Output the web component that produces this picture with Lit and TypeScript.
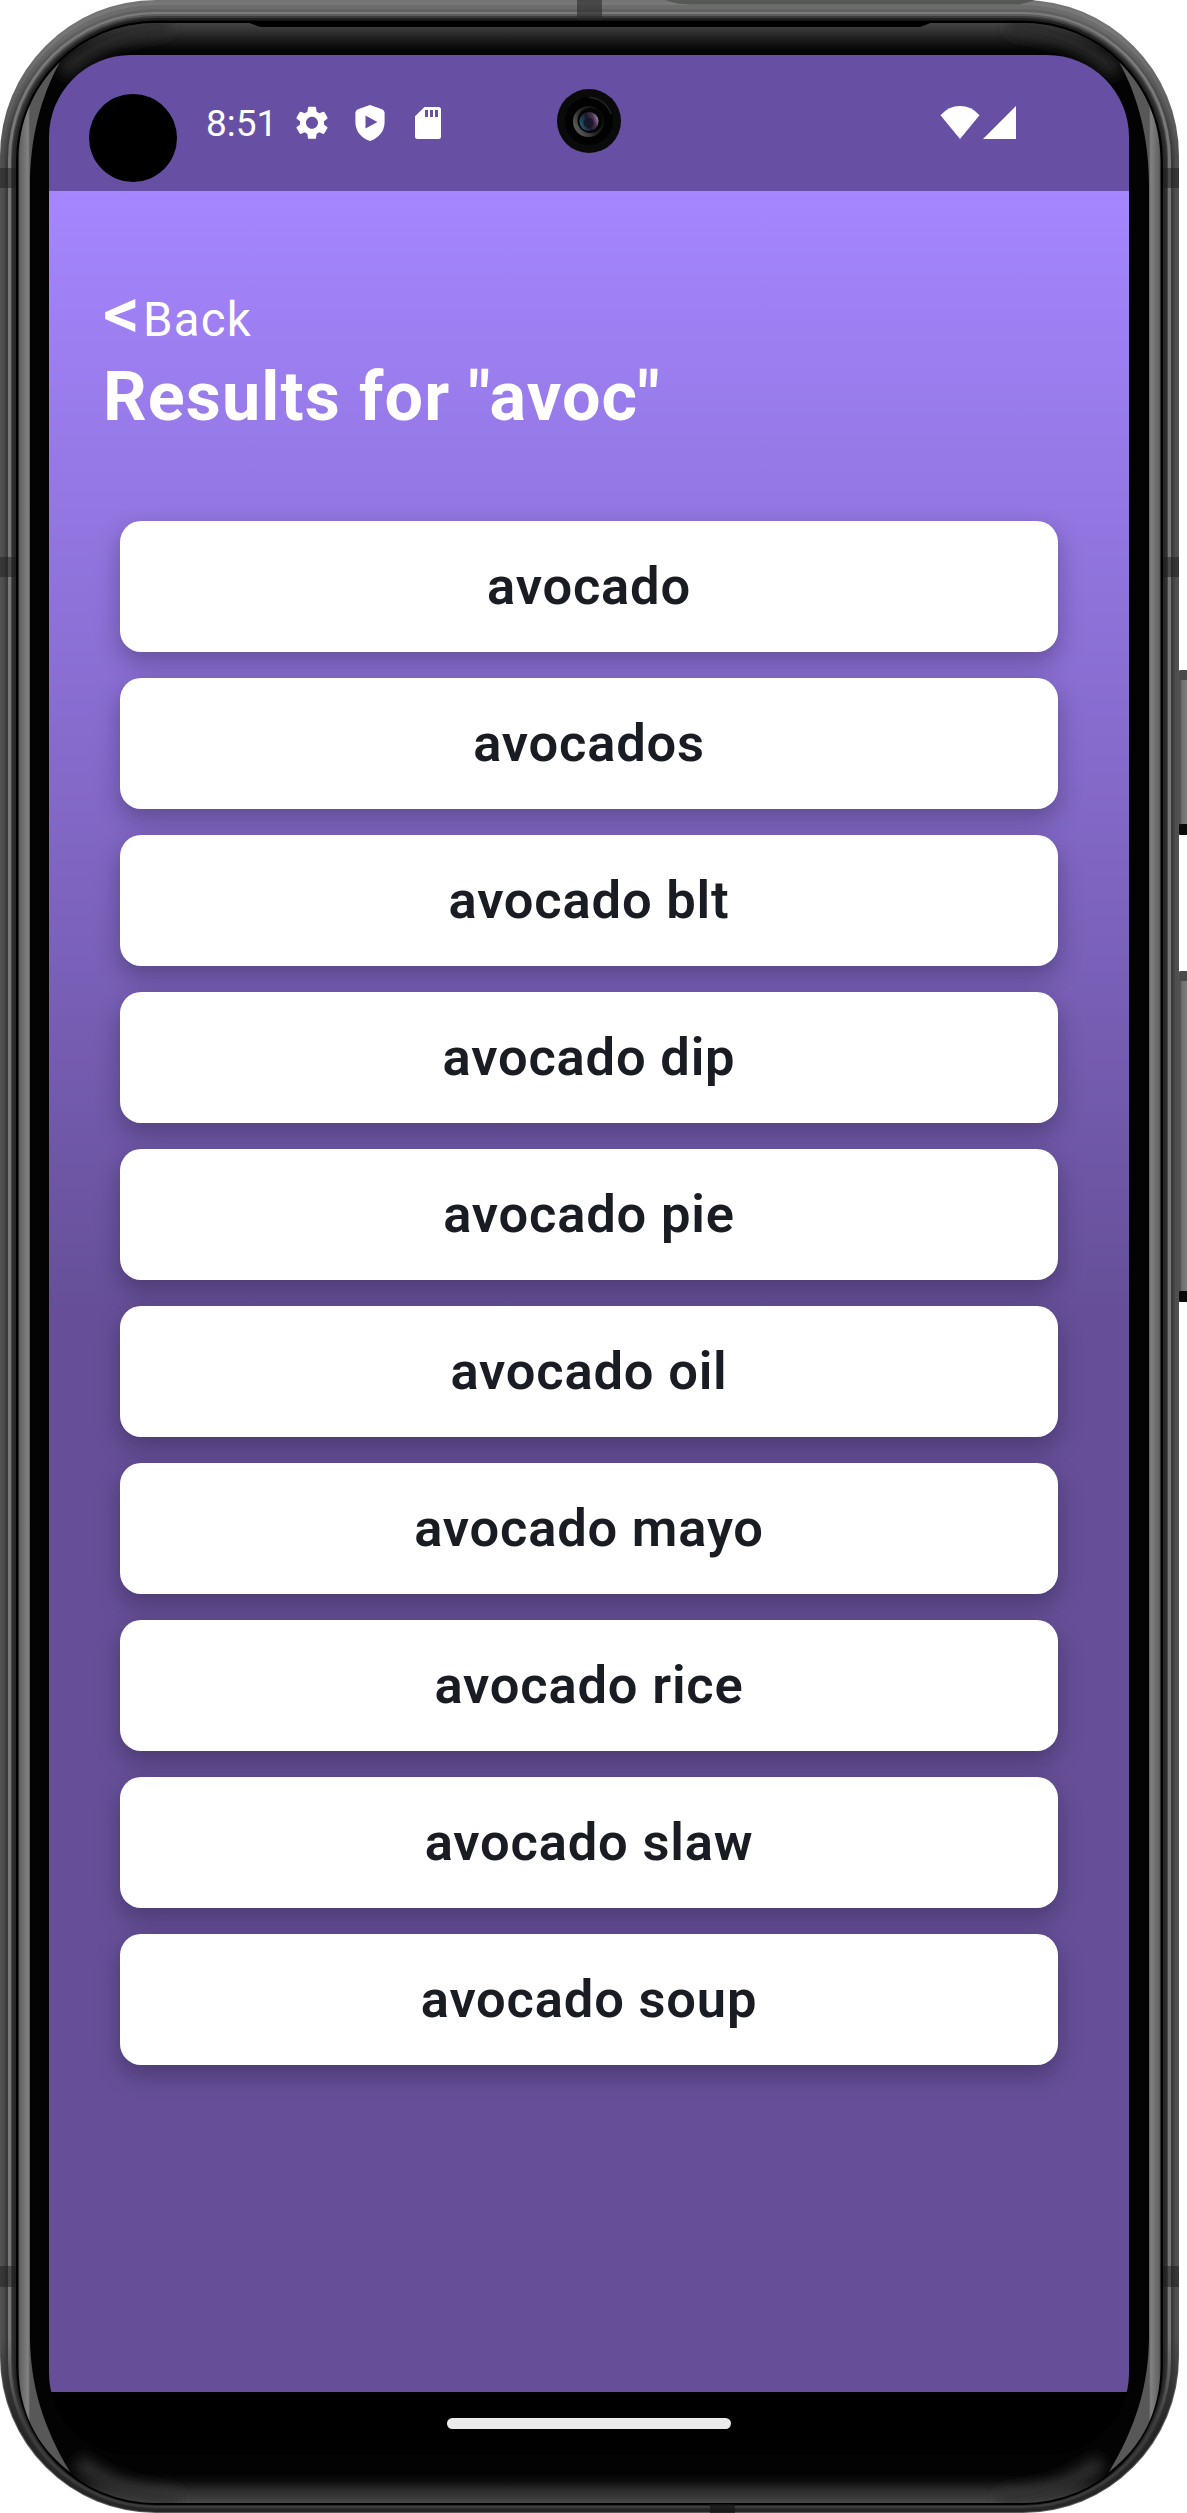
import { LitElement, html, css, svg } from "lit";
import { customElement, property } from "lit/decorators.js";

interface Layer {
  x: number;
  y: number;
  b: number;
  top: string;
  side: string;
  bottom: string;
}

const W = 1179;
const H = 2513;

// Nested rings of the metal casing, from the outside in: insets and tones.
const LAYERS: Layer[] = [
  { x: 0, y: 0, b: 0, top: "#747474", side: "#545454", bottom: "#5a5a5a" },
  { x: 1, y: 2, b: 1, top: "#787878", side: "#4e4e4e", bottom: "#242424" },
  { x: 4, y: 5, b: 2, top: "#6c6c6c", side: "#444444", bottom: "#262626" },
  { x: 6, y: 9, b: 4, top: "#606060", side: "#3a3a3a", bottom: "#2c2c2c" },
  { x: 8, y: 12, b: 5, top: "#7c7c7c", side: "#787878", bottom: "#3a3a3a" },
  { x: 11, y: 14, b: 6, top: "#5c5c5c", side: "#484848", bottom: "#3e3e3e" },
  { x: 12, y: 16, b: 7, top: "#3c3c3c", side: "#2e2e2e", bottom: "#303030" },
  { x: 14, y: 18, b: 7.5, top: "#202020", side: "#282828", bottom: "#202020" },
  { x: 16, y: 20.5, b: 8, top: "#000000", side: "#000000", bottom: "#000000" },
];

const RESULTS = [
  "avocado",
  "avocados",
  "avocado blt",
  "avocado dip",
  "avocado pie",
  "avocado oil",
  "avocado mayo",
  "avocado rice",
  "avocado slaw",
  "avocado soup",
];

@customElement("device-casing")
export class DeviceCasing extends LitElement {
  static styles = css`
    :host { display: block; }
    svg { display: block; }
  `;

  render() {
    const side = svg`
      <path d="M18.5 160C18.5 123 33 88 60 62C40 98 30 140 30 185V2340C31 2385 42 2425 70 2472C36 2446 18.5 2410 18.5 2366Z" fill="url(#shine)"/>
      <rect x="0" y="168" width="16" height="20" fill="#1c1c1c" opacity=".5"/>
      <rect x="0" y="557" width="16" height="20" fill="#1c1c1c" opacity=".5"/>
      <rect x="0" y="2266" width="16" height="21" fill="#1c1c1c" opacity=".5"/>`;
    return html`
      <svg width="1187" height="2513" viewBox="0 0 1187 2513">
        <defs>
          ${LAYERS.map((l, i) => svg`
            <linearGradient id=${"ring" + i} gradientUnits="userSpaceOnUse" x1="0" y1="0" x2="0" y2=${H}>
              <stop offset=".012" stop-color=${l.top}/>
              <stop offset=".062" stop-color=${l.side}/>
              <stop offset=".93" stop-color=${l.side}/>
              <stop offset=".965" stop-color=${l.bottom}/>
            </linearGradient>`)}
          <linearGradient id="shine" gradientUnits="userSpaceOnUse" x1="18" y1="0" x2="30" y2="0">
            <stop offset="0" stop-color="#4e4e4e"/>
            <stop offset=".2" stop-color="#646464"/>
            <stop offset=".85" stop-color="#828282"/>
            <stop offset="1" stop-color="#585858"/>
          </linearGradient>
          <linearGradient id="glassTop" gradientUnits="userSpaceOnUse" x1="0" y1="23" x2="0" y2="56">
            <stop offset="0" stop-color="#444"/>
            <stop offset=".2" stop-color="#363636"/>
            <stop offset=".5" stop-color="#1c1c1c"/>
            <stop offset=".8" stop-color="#060606"/>
            <stop offset="1" stop-color="#030303"/>
          </linearGradient>
          <linearGradient id="glassBottom" gradientUnits="userSpaceOnUse" x1="0" y1="2474" x2="0" y2="2503">
            <stop offset="0" stop-color="#030303"/>
            <stop offset=".25" stop-color="#0d0d0d"/>
            <stop offset=".6" stop-color="#2e2e2e"/>
            <stop offset=".85" stop-color="#3c3c3c"/>
            <stop offset="1" stop-color="#4a4a4a"/>
          </linearGradient>
          <linearGradient id="key" x1="0" y1="0" x2="1" y2="0">
            <stop offset="0" stop-color="#444"/>
            <stop offset=".35" stop-color="#707070"/>
            <stop offset="1" stop-color="#808080"/>
          </linearGradient>
          <filter id="soft" x="-20%" y="-60%" width="140%" height="220%">
            <feGaussianBlur stdDeviation="7"/>
          </filter>
          <clipPath id="glass"><rect x="18" y="23" width="1143" height="2480" rx="137"/></clipPath>
        </defs>

        ${[[670, 165], [971, 331]].map(([y, h]) => svg`
          <rect x="1178" y=${y} width="14" height=${h} rx="3" fill="#4a4a4a"/>
          <rect x="1179" y=${y + 10} width="9" height=${h - 20} fill="url(#key)"/>
          <rect x="1178" y=${y + h - 11} width="14" height="11" rx="3" fill="#0a0a0a"/>`)}

        ${LAYERS.map((l, i) => svg`
          <rect x=${l.x} y=${l.y} width=${W - 2 * l.x} height=${H - l.y - l.b} rx=${156 - l.x} fill=${`url(#ring${i})`}/>`)}

        <path d="M665 0H1036L1020 4.500H690Q675 4 665 0Z" fill="#555855"/>
        <rect x="577" y="0" width="25" height="20" fill="#2a2a2a" opacity=".6"/>
        <rect x="710" y="2504" width="25" height="9" fill="#161616" opacity=".7"/>

        <g clip-path="url(#glass)">
          <rect x="18" y="23" width="1143" height="2480" fill="#030303"/>
          <rect x="18" y="23" width="1143" height="33" fill="url(#glassTop)"/>
          <rect x="18" y="2474" width="1143" height="29" fill="url(#glassBottom)"/>
          <path d="M62 72C90 46 120 32 170 26" fill="none" stroke="#2c2c2c" stroke-width="16" filter="url(#soft)"/>
          <path d="M1117 72C1089 46 1059 32 1009 26" fill="none" stroke="#2c2c2c" stroke-width="16" filter="url(#soft)"/>
          <path d="M78 2462C105 2484 135 2494 180 2499" fill="none" stroke="#303030" stroke-width="16" filter="url(#soft)"/>
          <path d="M1101 2462C1074 2484 1044 2494 999 2499" fill="none" stroke="#303030" stroke-width="16" filter="url(#soft)"/>
        </g>
        <path d="M248 22.500L260 27H920L932 22.500Z" fill="#000"/>
        ${side}
        <g transform="translate(1179 0) scale(-1 1)">${side}</g>
      </svg>`;
  }
}

@customElement("status-bar")
export class StatusBar extends LitElement {
  static styles = css`
    :host {
      display: flex;
      box-sizing: border-box;
      height: 136px;
      padding: 50px 113px 0 157px;
      background: #6750a4;
      color: #fff;
      font: 400 37px/38px Roboto, sans-serif;
    }
    .time { width: 81px; white-space: nowrap; }
    .left { display: flex; flex: 1; }
    .right { display: flex; }
    svg { display: block; }
    .gear { margin: 0 0 0 7px; }
    .shield { margin-left: 25px; }
    .card { margin-left: 29px; }
    .wifi { margin-right: 3px; }
  `;

  render() {
    return html`
      <div class="left">
        <span class="time">8:51</span>
        <svg class="gear" width="36" height="36" viewBox="1.200 1.300 21.600 21.600" fill="#fff">
          <path d="M19.14 12.94c.04-.3.06-.61.06-.94 0-.32-.02-.64-.07-.94l2.03-1.58c.18-.14.23-.41.12-.61l-1.92-3.32c-.12-.22-.37-.29-.59-.22l-2.39.96c-.5-.38-1.03-.7-1.62-.94l-.36-2.54c-.04-.24-.24-.41-.48-.41h-3.84c-.24 0-.43.17-.47.41l-.36 2.54c-.59.24-1.13.57-1.62.94l-2.39-.96c-.22-.08-.47 0-.59.22L2.74 8.87c-.12.21-.08.47.12.61l2.03 1.58c-.05.3-.09.63-.09.94s.02.64.07.94l-2.03 1.58c-.18.14-.23.41-.12.61l1.92 3.32c.12.22.37.29.59.22l2.39-.96c.5.38 1.03.7 1.62.94l.36 2.54c.05.24.24.41.48.41h3.84c.24 0 .44-.17.47-.41l.36-2.54c.59-.24 1.13-.56 1.62-.94l2.39.96c.22.08.47 0 .59-.22l1.92-3.32c.12-.22.07-.47-.12-.61l-2.01-1.58zM12 15.6c-1.98 0-3.6-1.62-3.6-3.6s1.62-3.6 3.6-3.6 3.6 1.62 3.6 3.6-1.62 3.6-3.6 3.6z"/>
        </svg>
        <svg class="shield" width="30" height="36" viewBox="0 0 30 36" fill="#fff">
          <path fill-rule="evenodd" d="M15 0L27 4.300Q29.600 5.300 29.600 7.800V17C29.600 26 24 33 15 36C6 33 .4 26 .4 17V7.800Q.4 5.300 3 4.300ZM10.500 10.600V23.600L22.400 17.100Z"/>
        </svg>
        <svg class="card" width="28" height="36" viewBox="0 0 28 36" fill="#fff">
          <path fill-rule="evenodd" d="M10.500 2H24.500Q27 2 27 4.500V31.500Q27 34 24.500 34H3.500Q1 34 1 31.500V11.300ZM11 5V12H14V5ZM16 5V12H19V5ZM21 5V12H24V5Z"/>
        </svg>
      </div>
      <div class="right">
        <svg class="wifi" width="40" height="36" viewBox="0 0 40 36" fill="#fff">
          <path d="M20 34L.5 10.300Q8.500 1 20 1T39.500 10.300Z"/>
        </svg>
        <svg width="33" height="36" viewBox="0 0 33 36" fill="#fff">
          <path d="M0 34L33 1V34Z"/>
        </svg>
      </div>`;
  }
}

@customElement("result-list")
export class ResultList extends LitElement {
  @property({ attribute: false }) items: string[] = [];

  static styles = css`
    :host { display: block; }
    .list {
      display: flex;
      flex-direction: column;
      gap: 26px;
      margin: 0;
      padding: 0;
      list-style: none;
    }
    .item {
      display: flex;
      align-items: center;
      justify-content: center;
      box-sizing: border-box;
      height: 131px;
      padding-bottom: 1px;
      border-radius: 21px;
      background: #fff;
      color: #191c22;
      box-shadow: 0 10px 24px rgba(10, 10, 20, 0.3);
      font: 600 52.5px/62px Roboto, sans-serif;
      letter-spacing: 0.8px;
    }
  `;

  render() {
    return html`<ul class="list">
      ${this.items.map((item) => html`<li class="item">${item}</li>`)}
    </ul>`;
  }
}

@customElement("app-root")
export class AppRoot extends LitElement {
  static styles = css`
    :host {
      display: block;
      width: 1187px;
      height: 2513px;
      background: #fff;
    }
    .phone {
      position: relative;
      box-sizing: border-box;
      height: 2513px;
      padding: 55px 58px 58px 49px;
      overflow: hidden;
    }
    .casing { position: absolute; left: 0; top: 0; }
    .screen {
      position: relative;
      display: flex;
      flex-direction: column;
      height: 2400px;
      overflow: hidden;
      border-radius: 82px;
      background: #000;
    }
    .page {
      flex: 1;
      box-sizing: border-box;
      padding: 94px 71px 0;
      background: linear-gradient(#a586ff 0, #664f98 1125px);
      color: #fff;
      font-family: Roboto, sans-serif;
    }
    .back {
      display: flex;
      height: 72px;
      margin-left: -17px;
    }
    .chevron { width: 40px; font-size: 73px; font-weight: 500; line-height: 56px; }
    .label { font-size: 47.3px; line-height: 70px; letter-spacing: 1.3px; }
    .title {
      height: 164px;
      margin: 0 0 0 -17px;
      font-size: 68.3px;
      font-weight: 700;
      line-height: 80px;
      letter-spacing: 1.1px;
      white-space: nowrap;
    }
    .nav {
      display: flex;
      justify-content: center;
      height: 63px;
      padding-top: 26px;
      box-sizing: border-box;
    }
    .handle { width: 284px; height: 11px; border-radius: 6px; background: #ebebeb; }
    .cutout {
      position: absolute;
      left: 40px;
      top: 39px;
      width: 88px;
      height: 88px;
      border-radius: 50%;
      background: #000;
    }
    .camera { position: absolute; left: 508px; top: 33.5px; }
  `;

  render() {
    return html`
      <div class="phone">
        <device-casing class="casing"></device-casing>
        <div class="screen">
          <status-bar></status-bar>
          <div class="page">
            <div class="back">
              <span class="chevron">&lt;</span><span class="label">Back</span>
            </div>
            <h1 class="title">Results for "avoc"</h1>
            <result-list .items=${RESULTS}></result-list>
          </div>
          <div class="nav"><div class="handle"></div></div>
          <div class="cutout"></div>
          <svg class="camera" width="64" height="64" viewBox="0 0 64 64">
            <defs>
              <linearGradient id="rim" x1="0" y1=".8" x2="1" y2=".2">
                <stop offset="0" stop-color="#666"/>
                <stop offset=".5" stop-color="#222"/>
                <stop offset="1" stop-color="#080808"/>
              </linearGradient>
              <linearGradient id="lens" x1="0" y1=".65" x2="1" y2=".3">
                <stop offset="0" stop-color="#235f78"/>
                <stop offset=".45" stop-color="#171a2c"/>
                <stop offset=".75" stop-color="#4a3350"/>
                <stop offset="1" stop-color="#b58ac0"/>
              </linearGradient>
            </defs>
            <circle cx="32" cy="32" r="32" fill="#0a0a0a"/>
            <circle cx="32" cy="32" r="24" fill="#020202"/>
            <path d="M32 8.500A23.500 23.500 0 0 1 54 25" fill="none" stroke="#242424" stroke-width="1.500"/>
            <circle cx="31.500" cy="32.500" r="15.500" fill="url(#rim)"/>
            <circle cx="33" cy="31.500" r="12.500" fill="#050505"/>
            <circle cx="32" cy="32.500" r="9.500" fill="url(#lens)"/>
            <circle cx="31.500" cy="34" r="5" fill="#141525" opacity=".8"/>
          </svg>
        </div>
      </div>`;
  }
}
